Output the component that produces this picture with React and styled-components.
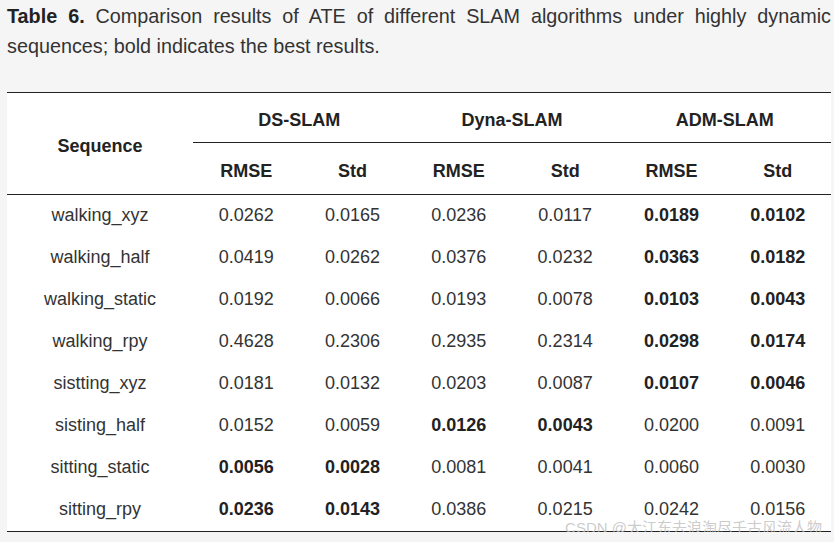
import React from 'react';
import styled, { createGlobalStyle } from 'styled-components';

const GlobalStyle = createGlobalStyle`
  html, body {
    margin: 0;
    padding: 0;
    background: #f5f5f5;
  }
  body {
    font-family: 'Liberation Sans', Arial, sans-serif;
  }
`;

const Page = styled.div`
  padding: 1px 3px 0 7px;
  width: 824px;
`;

const Caption = styled.p`
  margin: 0;
  font-size: 19.8px;
  line-height: 30px;
  color: #333;
  text-align: justify;
  b {
    color: #222;
  }
`;

const TableWrap = styled.div`
  position: relative;
  margin-top: 31px;
`;

const Table = styled.table`
  width: 824px;
  border-collapse: collapse;
  background: #fff;
  table-layout: fixed;
  border-top: 1px solid #222;
  border-bottom: 1px solid #222;
  font-size: 18px;
  color: #333;
`;

const Th = styled.th`
  padding: ${(p) => (p.$top ? '6px' : '5px')} 0 0;
  height: ${(p) => (p.$top ? '43px' : '46px')};
  font-weight: bold;
  color: #222;
  text-align: center;
  vertical-align: middle;
  border-bottom: ${(p) => (p.$line ? '1px solid #222' : 'none')};
`;

const HeadRow = styled.tr`
  border-bottom: ${(p) => (p.$last ? '1px solid #222' : 'none')};
`;

const Td = styled.td`
  padding: 0 0 2px;
  height: 40px;
  text-align: center;
  vertical-align: middle;
  font-weight: ${(p) => (p.$best ? 'bold' : 'normal')};
  color: ${(p) => (p.$best ? '#222' : '#333')};
`;

const Watermark = styled.div`
  position: absolute;
  right: 9px;
  bottom: -4px;
  font-family: 'Liberation Sans', 'Noto Sans CJK SC', sans-serif;
  font-size: 15px;
  line-height: 17px;
  color: rgba(190, 190, 190, 0.8);
  white-space: nowrap;
  pointer-events: none;
`;

const groups = ['DS-SLAM', 'Dyna-SLAM', 'ADM-SLAM'];

// values marked with * are the best results (bold)
const rows = [
  ['walking_xyz', '0.0262', '0.0165', '0.0236', '0.0117', '*0.0189', '*0.0102'],
  ['walking_half', '0.0419', '0.0262', '0.0376', '0.0232', '*0.0363', '*0.0182'],
  ['walking_static', '0.0192', '0.0066', '0.0193', '0.0078', '*0.0103', '*0.0043'],
  ['walking_rpy', '0.4628', '0.2306', '0.2935', '0.2314', '*0.0298', '*0.0174'],
  ['sistting_xyz', '0.0181', '0.0132', '0.0203', '0.0087', '*0.0107', '*0.0046'],
  ['sisting_half', '0.0152', '0.0059', '*0.0126', '*0.0043', '0.0200', '0.0091'],
  ['sitting_static', '*0.0056', '*0.0028', '0.0081', '0.0041', '0.0060', '0.0030'],
  ['sitting_rpy', '*0.0236', '*0.0143', '0.0386', '0.0215', '0.0242', '0.0156'],
];

export default function App() {
  return (
    <>
      <GlobalStyle />
      <Page>
        <Caption>
          <b>Table 6.</b> Comparison results of ATE of different SLAM algorithms under highly dynamic
          sequences; bold indicates the best results.
        </Caption>
        <TableWrap>
          <Table>
            <colgroup>
              <col style={{ width: 186 }} />
              {[0, 1, 2, 3, 4, 5].map((i) => (
                <col key={i} />
              ))}
            </colgroup>
            <thead>
              <HeadRow>
                <Th rowSpan={2}>Sequence</Th>
                {groups.map((g) => (
                  <Th key={g} colSpan={2} $top $line>
                    {g}
                  </Th>
                ))}
              </HeadRow>
              <HeadRow $last>
                {groups.map((g) => (
                  <React.Fragment key={g}>
                    <Th>RMSE</Th>
                    <Th>Std</Th>
                  </React.Fragment>
                ))}
              </HeadRow>
            </thead>
            <tbody>
              {rows.map((r) => (
                <tr key={r[0]}>
                  {r.map((v, i) => {
                    const best = v.startsWith('*');
                    return (
                      <Td key={i} $best={best}>
                        {best ? v.slice(1) : v}
                      </Td>
                    );
                  })}
                </tr>
              ))}
            </tbody>
          </Table>
          <Watermark>CSDN @大江东去浪淘尽千古风流人物</Watermark>
        </TableWrap>
      </Page>
    </>
  );
}
